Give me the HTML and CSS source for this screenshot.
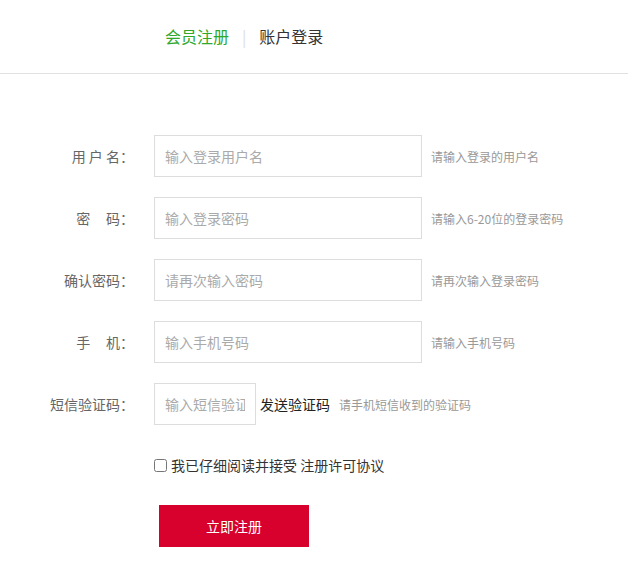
FILE: index.html
```html
<!DOCTYPE html>
<html lang="zh-CN">
<head>
<meta charset="utf-8">
<title>会员注册</title>
<link rel="stylesheet" href="styles.css">
</head>
<body>
<div class="header">
  <div class="tabs">
    <a class="tab active">会员注册</a>
    <span class="sep">|</span>
    <a class="tab">账户登录</a>
  </div>
</div>
<form class="form">
  <div class="row">
    <label class="label">用&nbsp;户&nbsp;名：</label>
    <input class="input" type="text" placeholder="输入登录用户名">
    <span class="hint">请输入登录的用户名</span>
  </div>
  <div class="row">
    <label class="label">密&nbsp;&nbsp;&nbsp;&nbsp;&nbsp;码：</label>
    <input class="input" type="password" placeholder="输入登录密码">
    <span class="hint">请输入6-20位的登录密码</span>
  </div>
  <div class="row">
    <label class="label">确认密码：</label>
    <input class="input" type="password" placeholder="请再次输入密码">
    <span class="hint">请再次输入登录密码</span>
  </div>
  <div class="row">
    <label class="label">手&nbsp;&nbsp;&nbsp;&nbsp;&nbsp;机：</label>
    <input class="input" type="text" placeholder="输入手机号码">
    <span class="hint">请输入手机号码</span>
  </div>
  <div class="row last">
    <label class="label">短信验证码：</label>
    <input class="input short" type="text" placeholder="输入短信验证码">
    <a class="send">发送验证码</a>
    <span class="hint hint-sms">请手机短信收到的验证码</span>
  </div>
  <div class="agree">
    <input class="check" type="checkbox" id="agree">
    <label for="agree">我已仔细阅读并接受 注册许可协议</label>
  </div>
  <div class="submit-row">
    <button class="submit" type="button">立即注册</button>
  </div>
</form>
</body>
</html>
```
FILE: styles.css
```css
* { box-sizing: border-box; }
body {
  margin: 0;
  font-family: "Microsoft YaHei", "Noto Sans CJK SC", "Liberation Sans", sans-serif;
  color: #333;
  background: #fff;
}
.header {
  height: 74px;
  border-bottom: 1px solid #e0e0e0;
}
.tabs {
  display: flex;
  align-items: center;
  padding-left: 165px;
  height: 71px;
  font-size: 16px;
  line-height: 20px;
}
.tab { color: #333; }
.tab.active { color: #2fa82b; }
.sep {
  color: #ddd;
  margin: 0 13px 0 13px;
  font-size: 16px;
}
.form {
  padding-top: 61px;
}
.row {
  display: flex;
  align-items: center;
  height: 42px;
  margin-bottom: 20px;
}
.row.last { margin-bottom: 19px; }
.label {
  width: 134px;
  text-align: right;
  font-size: 14px;
  color: #666;
  margin-right: 20px;
  white-space: nowrap;
}
.input {
  width: 268px;
  height: 42px;
  border: 1px solid #ddd;
  padding: 0 10px;
  font-family: inherit;
  font-size: 14px;
  color: #333;
  outline: none;
}
.input::placeholder { color: #aaa; }
.input.short { width: 102px; }
.hint {
  font-size: 12px;
  color: #999;
  margin-left: 9px;
}
.send {
  font-size: 14px;
  color: #222;
  margin-left: 4px;
}
.hint-sms { margin-left: 9px; }
.agree {
  display: flex;
  align-items: center;
  padding-left: 154px;
  height: 42px;
  font-size: 14px;
  color: #333;
}
.check {
  margin: 0 4px 0 0;
  width: 13px;
  height: 13px;
}
.submit-row {
  padding-left: 159px;
  margin-top: 19px;
}
.submit {
  width: 150px;
  height: 42px;
  border: none;
  background: #d8002c;
  color: #fff;
  font-family: inherit;
  font-size: 14px;
}
```
